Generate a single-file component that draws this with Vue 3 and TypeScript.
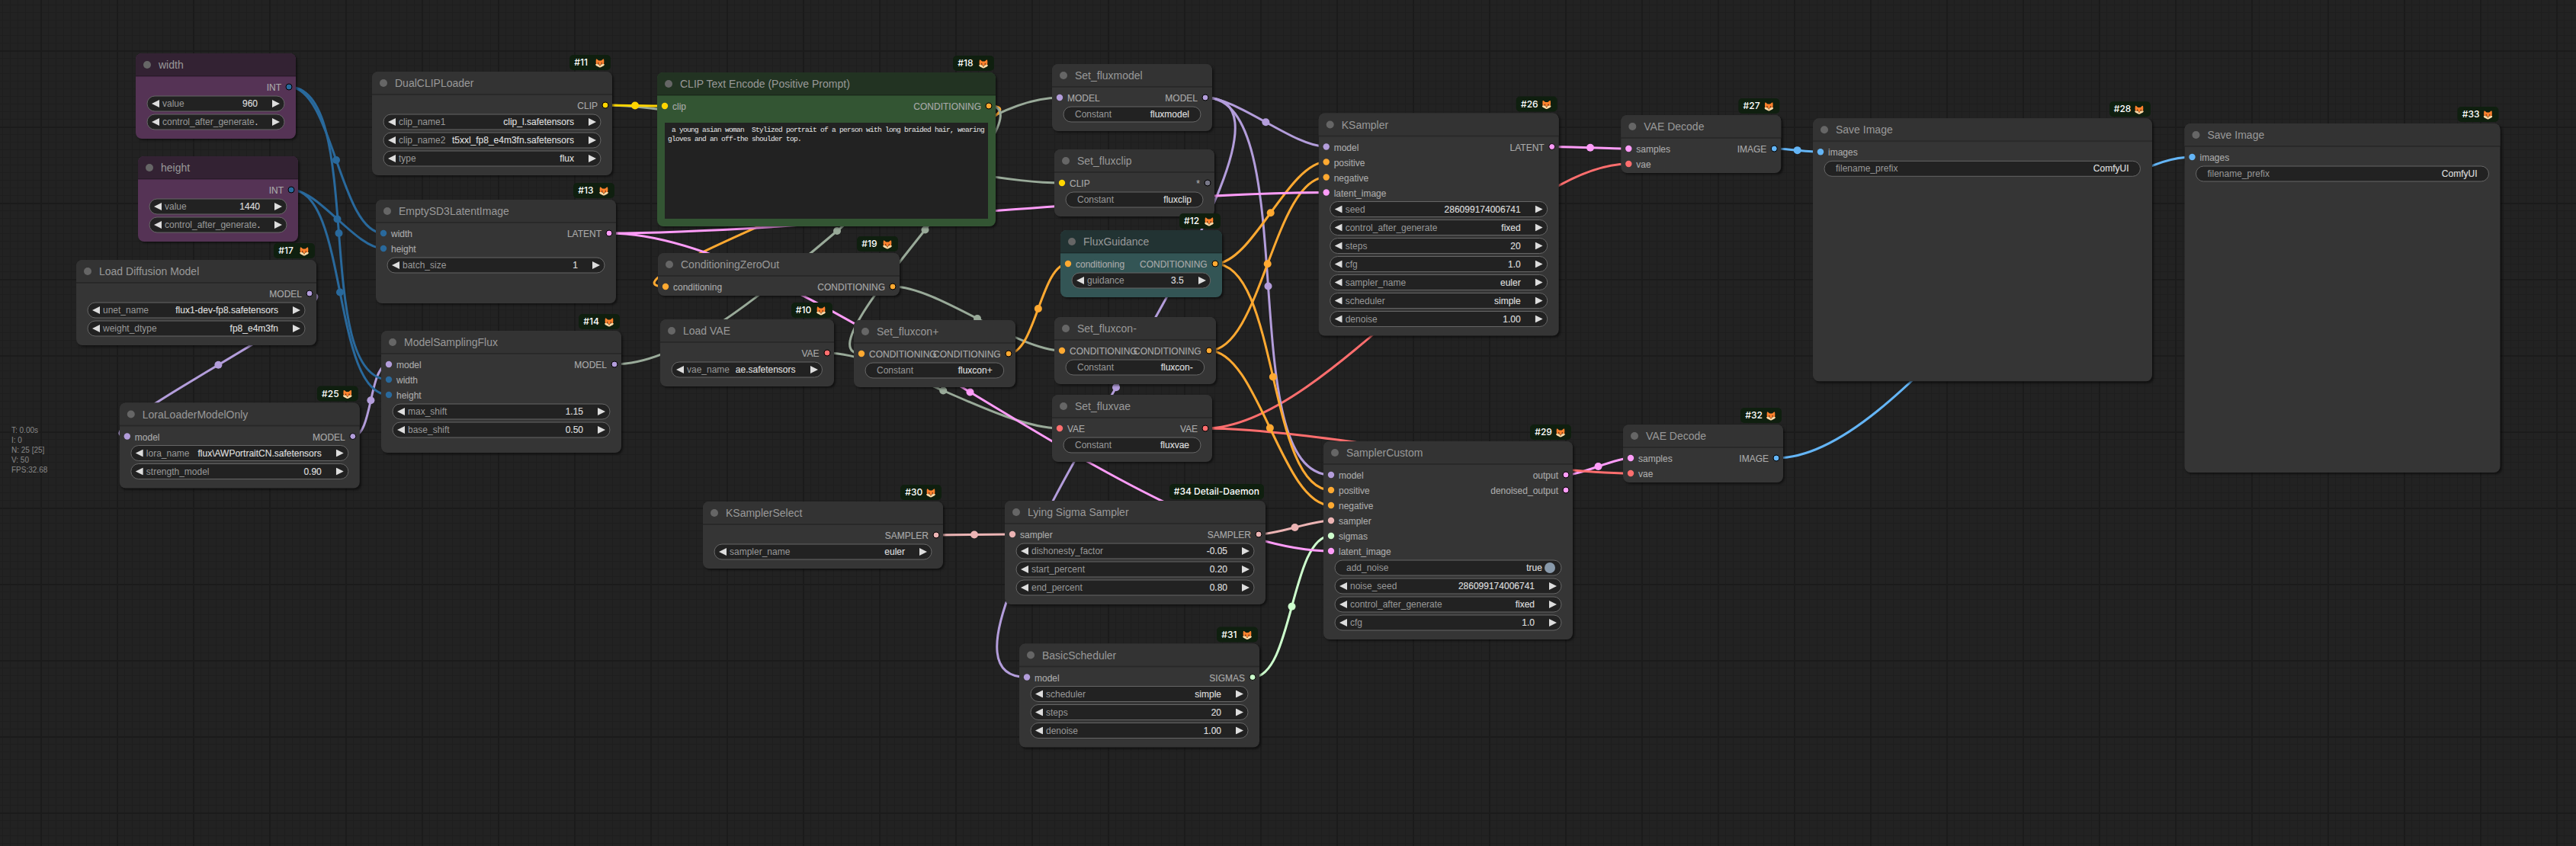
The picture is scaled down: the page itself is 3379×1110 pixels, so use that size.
<script setup lang="ts">
type Slot = [label: string, color: string]
interface Widget {
  label: string
  value: string
  kind?: 'text' | 'toggle'
}
interface GraphNode {
  id: string
  title: string
  x: number
  y: number
  w: number
  h: number
  theme?: string
  badge?: string
  fox?: boolean
  inputs?: Slot[]
  outputs?: Slot[]
  widgets?: Widget[]
  prompt?: string
}

const C = {
  model: '#b39ddb',
  int: '#29699c',
  clip: '#ffd500',
  cond: '#ffa931',
  latent: '#ff9cf9',
  vae: '#ff6e6e',
  image: '#64b5f6',
  sampler: '#ecb4b4',
  sigmas: '#cdffcd',
  any: '#778',
  plain: '#9a9',
}

const combo = (label: string, value: string): Widget => ({ label, value })
const text = (label: string, value: string): Widget => ({ label, value, kind: 'text' })

// x / y are the top left corner of the node body, below its 30px title bar
const nodes: GraphNode[] = [
  { id: 'width', title: 'width', x: 178, y: 100, w: 210, h: 82, theme: 'purple', outputs: [['INT', C.int]], widgets: [combo('value', '960'), combo('control_after_generate', '.')] },
  { id: 'height', title: 'height', x: 181, y: 235, w: 210, h: 82, theme: 'purple', outputs: [['INT', C.int]], widgets: [combo('value', '1440'), combo('control_after_generate', '.')] },
  { id: 'unet', title: 'Load Diffusion Model', x: 100, y: 371, w: 315, h: 82, badge: '#17', fox: true, outputs: [['MODEL', C.model]], widgets: [combo('unet_name', 'flux1-dev-fp8.safetensors'), combo('weight_dtype', 'fp8_e4m3fn')] },
  { id: 'lora', title: 'LoraLoaderModelOnly', x: 156.8, y: 558.5, w: 315, h: 82, badge: '#25', fox: true, inputs: [['model', C.model]], outputs: [['MODEL', C.model]], widgets: [combo('lora_name', 'flux\\AWPortraitCN.safetensors'), combo('strength_model', '0.90')] },
  { id: 'dual', title: 'DualCLIPLoader', x: 488, y: 124, w: 315, h: 106, badge: '#11', fox: true, outputs: [['CLIP', C.clip]], widgets: [combo('clip_name1', 'clip_l.safetensors'), combo('clip_name2', 't5xxl_fp8_e4m3fn.safetensors'), combo('type', 'flux')] },
  { id: 'empty', title: 'EmptySD3LatentImage', x: 493, y: 292, w: 315, h: 106, badge: '#13', fox: true, inputs: [['width', C.int], ['height', C.int]], outputs: [['LATENT', C.latent]], widgets: [combo('batch_size', '1')] },
  { id: 'msf', title: 'ModelSamplingFlux', x: 500, y: 464, w: 315, h: 130, badge: '#14', fox: true, inputs: [['model', C.model], ['width', C.int], ['height', C.int]], outputs: [['MODEL', C.model]], widgets: [combo('max_shift', '1.15'), combo('base_shift', '0.50')] },
  { id: 'text', title: 'CLIP Text Encode (Positive Prompt)', x: 862, y: 125, w: 444, h: 172, theme: 'green', badge: '#18', fox: true, inputs: [['clip', C.clip]], outputs: [['CONDITIONING', C.cond]], prompt: ' a young asian woman  Stylized portrait of a person with long braided hair, wearing\ngloves and an off-the shoulder top.' },
  { id: 'zero', title: 'ConditioningZeroOut', x: 863, y: 362, w: 317, h: 26, badge: '#19', fox: true, inputs: [['conditioning', C.cond]], outputs: [['CONDITIONING', C.cond]] },
  { id: 'vae', title: 'Load VAE', x: 866, y: 449, w: 227.5, h: 58, badge: '#10', fox: true, outputs: [['VAE', C.vae]], widgets: [combo('vae_name', 'ae.safetensors')] },
  { id: 'conp', title: 'Set_fluxcon+', x: 1120, y: 450, w: 211.7, h: 58, inputs: [['CONDITIONING', C.cond]], outputs: [['CONDITIONING', C.cond]], widgets: [text('Constant', 'fluxcon+')] },
  { id: 'fmodel', title: 'Set_fluxmodel', x: 1380, y: 114, w: 210, h: 58, inputs: [['MODEL', C.model]], outputs: [['MODEL', C.model]], widgets: [text('Constant', 'fluxmodel')] },
  { id: 'fclip', title: 'Set_fluxclip', x: 1383, y: 226, w: 210, h: 58, inputs: [['CLIP', C.clip]], outputs: [['*', C.any]], widgets: [text('Constant', 'fluxclip')] },
  { id: 'guid', title: 'FluxGuidance', x: 1391, y: 332, w: 211.7, h: 58, theme: 'cyan', badge: '#12', fox: true, inputs: [['conditioning', C.cond]], outputs: [['CONDITIONING', C.cond]], widgets: [combo('guidance', '3.5')] },
  { id: 'conn', title: 'Set_fluxcon-', x: 1383, y: 446, w: 211.7, h: 58, inputs: [['CONDITIONING', C.cond]], outputs: [['CONDITIONING', C.cond]], widgets: [text('Constant', 'fluxcon-')] },
  { id: 'fvae', title: 'Set_fluxvae', x: 1380, y: 548, w: 210, h: 58, inputs: [['VAE', C.vae]], outputs: [['VAE', C.vae]], widgets: [text('Constant', 'fluxvae')] },
  { id: 'ks', title: 'KSampler', x: 1729.7, y: 178.5, w: 315, h: 262, badge: '#26', fox: true, inputs: [['model', C.model], ['positive', C.cond], ['negative', C.cond], ['latent_image', C.latent]], outputs: [['LATENT', C.latent]], widgets: [combo('seed', '286099174006741'), combo('control_after_generate', 'fixed'), combo('steps', '20'), combo('cfg', '1.0'), combo('sampler_name', 'euler'), combo('scheduler', 'simple'), combo('denoise', '1.00')] },
  { id: 'kss', title: 'KSamplerSelect', x: 922, y: 688, w: 315, h: 58, badge: '#30', fox: true, outputs: [['SAMPLER', C.sampler]], widgets: [combo('sampler_name', 'euler')] },
  { id: 'lying', title: 'Lying Sigma Sampler', x: 1318, y: 687, w: 342, h: 106, badge: '#34 Detail-Daemon', inputs: [['sampler', C.sampler]], outputs: [['SAMPLER', C.sampler]], widgets: [combo('dishonesty_factor', '-0.05'), combo('start_percent', '0.20'), combo('end_percent', '0.80')] },
  { id: 'basic', title: 'BasicScheduler', x: 1337, y: 874.5, w: 315, h: 106, badge: '#31', fox: true, inputs: [['model', C.model]], outputs: [['SIGMAS', C.sigmas]], widgets: [combo('scheduler', 'simple'), combo('steps', '20'), combo('denoise', '1.00')] },
  { id: 'sc', title: 'SamplerCustom', x: 1736, y: 609, w: 327, h: 230, badge: '#29', fox: true, inputs: [['model', C.model], ['positive', C.cond], ['negative', C.cond], ['sampler', C.sampler], ['sigmas', C.sigmas], ['latent_image', C.latent]], outputs: [['output', C.latent], ['denoised_output', C.latent]], widgets: [{ label: 'add_noise', value: 'true', kind: 'toggle' }, combo('noise_seed', '286099174006741'), combo('control_after_generate', 'fixed'), combo('cfg', '1.0')] },
  { id: 'dec1', title: 'VAE Decode', x: 2126.3, y: 181, w: 210, h: 46, badge: '#27', fox: true, inputs: [['samples', C.latent], ['vae', C.vae]], outputs: [['IMAGE', C.image]] },
  { id: 'dec2', title: 'VAE Decode', x: 2129, y: 587, w: 210, h: 46, badge: '#32', fox: true, inputs: [['samples', C.latent], ['vae', C.vae]], outputs: [['IMAGE', C.image]] },
  { id: 'save1', title: 'Save Image', x: 2378, y: 185.3, w: 444.5, h: 315, badge: '#28', fox: true, inputs: [['images', C.image]], widgets: [text('filename_prefix', 'ComfyUI')] },
  { id: 'save2', title: 'Save Image', x: 2865.5, y: 192, w: 414, h: 428, badge: '#33', fox: true, inputs: [['images', C.image]], widgets: [text('filename_prefix', 'ComfyUI')] },
]

// [source node, output index, target node, input index, colour]
const wires: [string, number, string, number, string][] = [
  ['unet', 0, 'lora', 0, C.model],
  ['width', 0, 'empty', 0, C.int],
  ['height', 0, 'empty', 1, C.int],
  ['lora', 0, 'msf', 0, C.model],
  ['width', 0, 'msf', 1, C.int],
  ['height', 0, 'msf', 2, C.int],
  ['msf', 0, 'fmodel', 0, C.plain],
  ['dual', 0, 'fclip', 0, C.plain],
  ['dual', 0, 'text', 0, C.clip],
  ['text', 0, 'zero', 0, C.cond],
  ['text', 0, 'conp', 0, C.plain],
  ['zero', 0, 'conn', 0, C.plain],
  ['vae', 0, 'fvae', 0, C.plain],
  ['conp', 0, 'guid', 0, C.cond],
  ['fvae', 0, 'dec1', 1, C.vae],
  ['fmodel', 0, 'basic', 0, C.model],
  ['fmodel', 0, 'ks', 0, C.model],
  ['fmodel', 0, 'sc', 0, C.model],
  ['guid', 0, 'ks', 1, C.cond],
  ['conn', 0, 'ks', 2, C.cond],
  ['empty', 0, 'ks', 3, C.latent],
  ['kss', 0, 'lying', 0, C.sampler],
  ['ks', 0, 'dec1', 0, C.latent],
  ['sc', 0, 'dec2', 0, C.latent],
  ['fvae', 0, 'dec2', 1, C.vae],
  ['guid', 0, 'sc', 1, C.cond],
  ['conn', 0, 'sc', 2, C.cond],
  ['lying', 0, 'sc', 3, C.sampler],
  ['basic', 0, 'sc', 4, C.sigmas],
  ['empty', 0, 'sc', 5, C.latent],
  ['dec1', 0, 'save1', 0, C.image],
  ['dec2', 0, 'save2', 0, C.image],
]

const byId = new Map(nodes.map((n) => [n.id, n]))
const links = wires.map(([from, out, to, inp, color]) => {
  const a = byId.get(from)!
  const b = byId.get(to)!
  const x1 = a.x + a.w - 9
  const y1 = a.y + 14 + out * 20
  const x2 = b.x + 10
  const y2 = b.y + 14 + inp * 20
  const pull = Math.hypot(x2 - x1, y2 - y1) * 0.25
  return {
    d: `M${x1} ${y1}C${x1 + pull} ${y1} ${x2 - pull} ${y2} ${x2} ${y2}`,
    mx: (x1 + x2) / 2,
    my: (y1 + y2) / 2,
    color,
  }
})

const stats = ['T: 0.00s', 'I: 0', 'N: 25 [25]', 'V: 50', 'FPS:32.68']
</script>

<template>
  <main class="graph">
    <svg class="links" width="3379" height="1110">
      <g v-for="(l, i) in links" :key="i">
        <path :d="l.d" fill="none" :stroke="l.color" stroke-width="3" />
        <circle :cx="l.mx" :cy="l.my" r="5" :fill="l.color" />
      </g>
    </svg>

    <article
      v-for="n in nodes"
      :key="n.id"
      class="node"
      :class="n.theme"
      :style="{ transform: `translate(${n.x}px, ${n.y - 30}px)`, width: n.w + 'px', height: n.h + 30 + 'px' }"
    >
      <div v-if="n.badge" class="badge" :class="{ 'with-fox': n.fox }">
        <span>{{ n.badge }}</span>
        <svg v-if="n.fox" class="fox" viewBox="0 0 12 12">
          <path d="M1 .6C1.300.2 1.800.4 2.200.8L4.300 2.600h3.400L9.800.8c.4-.4.9-.6 1.200-.2.4 1.800.5 4.200 0 6.600H1C.5 4.800.6 2.400 1 .6z" fill="#ff822d" />
          <path d="M0 7.500c1.600-.7 3.500-.4 4.600.2L6 9l1.400-1.300C8.500 7.100 10.400 6.800 12 7.500c-.6 1.800-2.200 2.500-3.600 3C7.500 11.200 6.800 11.500 6 11.500s-1.500-.3-2.400-1C2.200 10 .6 9.300 0 7.500z" fill="#ffdca8" />
          <path d="M4.400 5h3.200L7 7.800 6 9.400 5 7.800z" fill="#ff822d" />
          <circle cx="3.700" cy="5.900" r=".8" fill="#5a2f1e" />
          <circle cx="8.300" cy="5.900" r=".8" fill="#5a2f1e" />
          <path d="M5.100 8.700h1.800L6 9.800z" fill="#3c2a2a" />
        </svg>
      </div>
      <header class="title"><i class="bullet"></i>{{ n.title }}</header>
      <section class="slots">
        <ul class="inputs">
          <li v-for="s in n.inputs" :key="s[0]">
            <svg class="pin" viewBox="0 0 10 10"><circle cx="5" cy="5" r="4.200" :fill="s[1]" /></svg>
            <span>{{ s[0] }}</span>
          </li>
        </ul>
        <ul class="outputs">
          <li v-for="s in n.outputs" :key="s[0]">
            <span>{{ s[0] }}</span>
            <svg class="pin" viewBox="0 0 10 10"><circle cx="5" cy="5" r="4" :fill="s[1]" stroke="#000" /></svg>
          </li>
        </ul>
      </section>
      <section v-if="n.widgets" class="widgets">
        <div v-for="w in n.widgets" :key="w.label" class="widget" :class="w.kind ?? 'combo'">
          <svg class="pill"><rect width="100%" height="20" rx="10" /></svg>
          <svg v-if="!w.kind" class="arrow" viewBox="0 0 10 10"><path d="M10 0 0 5l10 5z" /></svg>
          <span class="label">{{ w.label }}</span>
          <span class="value">{{ w.value }}</span>
          <svg v-if="!w.kind" class="arrow" viewBox="0 0 10 10"><path d="M0 0l10 5-10 5z" /></svg>
          <i v-if="w.kind === 'toggle'" class="knob"></i>
        </div>
      </section>
      <div v-if="n.prompt" class="prompt">{{ n.prompt }}</div>
    </article>

    <aside class="stats">
      <div v-for="s in stats" :key="s">{{ s }}</div>
    </aside>
  </main>
</template>

<style>
body {
  background: #222;
}
</style>

<style scoped>
.graph {
  position: relative;
  width: 3379px;
  height: 1110px;
  overflow: hidden;
  font-family: 'Liberation Sans', Arial, sans-serif;
  font-size: 12px;
  background-color: #222;
  background-image:
    linear-gradient(90deg, #1b1b1b 2px, transparent 2px),
    linear-gradient(#1b1b1b 2px, transparent 2px),
    linear-gradient(90deg, #1e1e1e 1px, transparent 1px),
    linear-gradient(#1e1e1e 1px, transparent 1px);
  background-size: 100px 100px, 100px 100px, 10px 10px, 10px 10px;
  background-position: 53px 66px, 53px 66px, 3px 6px, 3px 6px;
}
.links {
  position: absolute;
  left: 0;
  top: 0;
}
.node {
  position: absolute;
  left: 0;
  top: 0;
  box-sizing: border-box;
  border-radius: 8px;
  background: #353535;
  box-shadow: 2px 2px 3px rgba(0, 0, 0, 0.5);
  white-space: nowrap;
}
.title {
  display: flex;
  align-items: center;
  gap: 10px;
  height: 30px;
  padding-left: 10px;
  box-sizing: border-box;
  border-radius: 8px 8px 0 0;
  background: #333;
  color: #999;
  font-size: 14px;
  line-height: 30px;
}
.bullet {
  width: 10px;
  height: 10px;
  border-radius: 50%;
  background: #666;
}
.slots {
  display: flex;
  padding-top: 4px;
  box-shadow: 0 -1px rgba(0, 0, 0, 0.2), inset 0 1px rgba(0, 0, 0, 0.2);
  color: #aaa;
  -webkit-text-stroke: 0.12px #aaa;
}
.slots ul {
  width: 50%;
  margin: 0;
  padding: 0;
  list-style: none;
}
.slots li {
  display: flex;
  align-items: center;
  gap: 5px;
  height: 20px;
  line-height: 22px;
}
.slots span {
  height: 20px;
}
.inputs li {
  padding-left: 5px;
}
.outputs li {
  justify-content: flex-end;
  padding-right: 4px;
}
.pin {
  flex: none;
  width: 10px;
  height: 10px;
  overflow: visible;
}
.widgets {
  display: flex;
  flex-direction: column;
  gap: 4px;
  padding: 2px 15px 0;
}
.widget {
  position: relative;
  display: flex;
  align-items: center;
  height: 20px;
  padding: 0 6px;
  line-height: 20px;
  color: #ddd;
}
.widget.text {
  padding: 0 15px;
}
.widget.toggle {
  padding: 0 8px 0 15px;
}
.pill {
  position: absolute;
  left: 0;
  top: 0;
  width: 100%;
  height: 20px;
  overflow: visible;
}
.pill rect {
  fill: #222;
  stroke: #666;
}
.arrow {
  position: relative;
  flex: none;
  width: 10px;
  height: 10px;
  fill: #ddd;
}
.label {
  position: relative;
  color: #999;
}
.combo .label {
  margin-left: 4px;
}
.value {
  position: relative;
  margin-left: auto;
  -webkit-text-stroke: 0.16px #ddd;
}
.combo .value {
  margin-right: 19px;
}
.knob {
  position: relative;
  width: 14.4px;
  height: 14.4px;
  margin-left: 2.800px;
  border-radius: 50%;
  background: #89a;
}
.badge {
  position: absolute;
  top: -22px;
  right: 2px;
  display: flex;
  align-items: center;
  height: 20px;
  padding: 0 6px;
  border-radius: 5px;
  background: #0f1f0f;
  color: #fff;
  font: 500 12px/20px Inter, sans-serif;
}
.badge.with-fox {
  justify-content: space-between;
  width: 53.7px;
  padding-right: 8.5px;
  box-sizing: border-box;
}
.fox {
  flex: none;
  width: 12px;
  height: 12px;
  margin-top: 1px;
}
.prompt {
  height: 126px;
  margin: 12px 10px 0;
  padding: 4px 4px;
  box-sizing: border-box;
  overflow: hidden;
  background: #222;
  color: #ddd;
  font: 9.5px/12px 'Liberation Mono', monospace;
  letter-spacing: -0.7px;
  -webkit-text-stroke: 0.1px #ddd;
  white-space: pre;
}
.purple {
  background: #535;
}
.purple .title {
  background: #323;
}
.green {
  background: #353;
}
.green .title {
  background: #232;
}
.cyan {
  background: #355;
}
.cyan .title {
  background: #233;
}
.stats {
  position: absolute;
  left: 15px;
  top: 558px;
  color: #888;
  font-size: 10px;
  line-height: 13px;
}
</style>
